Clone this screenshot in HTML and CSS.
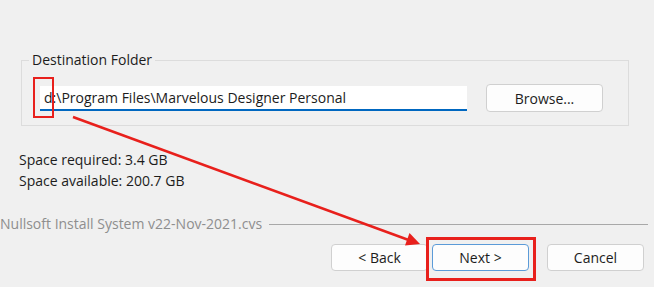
FILE: index.html
```html
<!DOCTYPE html>
<html lang="en">
<head>
    <meta charset="UTF-8">
    <title>Installer - Choose Install Location</title>
    <link rel="stylesheet" href="styles.css">
</head>
<body>
    <div id="page">
        <div class="group">
            <span class="group-title">Destination Folder</span>
            <div class="group-row">
                <div class="path-input">d:\Program Files\Marvelous Designer Personal</div>
                <button class="btn btn-browse">Browse...</button>
            </div>
        </div>

        <div class="space-info">
            <div>Space required: 3.4 GB</div>
            <div>Space available: 200.7 GB</div>
        </div>

        <div class="branding">
            <span class="branding-text">Nullsoft Install System v22-Nov-2021.cvs</span>
            <span class="branding-line"></span>
        </div>

        <div class="buttons">
            <button class="btn">&lt; Back</button>
            <button class="btn btn-default">Next &gt;</button>
            <button class="btn btn-cancel">Cancel</button>
        </div>

        <!-- annotation overlay -->
        <div class="mark mark-drive"></div>
        <div class="mark mark-next"></div>
        <svg class="arrow" width="654" height="287" viewBox="0 0 654 287">
            <line x1="73" y1="117" x2="410" y2="240.5" stroke="#e8201c" stroke-width="2.5"/>
            <polygon points="420,244 405,245.5 409.5,233" fill="#e8201c"/>
        </svg>
    </div>
</body>
</html>
```

FILE: styles.css
```css
body {
    margin: 0;
    padding: 0;
    background-color: #f0f0f0;
    font-family: "Open Sans", "Noto Sans", sans-serif;
    font-size: 14px;
    color: #1c1c1c;
}

#page {
    position: relative;
    width: 654px;
    height: 287px;
    overflow: hidden;
}

.group {
    margin: 60px 25px 0 21px;
    height: 64px;
    border: 1px solid #dcdcdc;
}

.group-title {
    display: inline-block;
    margin: -10px 0 0 7px;
    padding: 0 3px;
    background-color: #f0f0f0;
    line-height: 18px;
    vertical-align: top;
}

.group-row {
    display: flex;
    align-items: center;
    padding-left: 18px;
    margin-top: 4px;
}

.path-input {
    width: 423px;
    height: 23px;
    padding-left: 4px;
    background-color: #fff;
    border-bottom: 2px solid #0067c0;
    line-height: 24px;
    white-space: nowrap;
}

.btn {
    height: 27px;
    width: 97px;
    padding: 0;
    font-family: inherit;
    font-size: 14px;
    color: #1c1c1c;
    background-color: #fdfdfd;
    border: 1px solid #d0d0d0;
    border-radius: 4px;
}

.btn-browse {
    width: 117px;
    height: 28px;
    margin-left: 19px;
}

.btn-default {
    border-color: #5b9bd8;
    margin-left: 4px;
}

.btn-cancel {
    margin-left: 18px;
}

.space-info {
    margin: 23px 0 0 19px;
    line-height: 21px;
}

.branding {
    display: flex;
    align-items: center;
    margin-top: 23px;
    color: #8e8e8e;
}

.branding-text {
    white-space: nowrap;
}

.branding-line {
    flex: 1;
    margin: 2px 6px 0 7px;
    border-top: 1px solid #a8a8a8;
}

.buttons {
    display: flex;
    justify-content: flex-end;
    margin: 11px 10px 0 0;
}

.mark {
    position: absolute;
    border: 2px solid #e8201c;
}

.mark-drive {
    left: 33px;
    top: 77px;
    width: 17px;
    height: 37px;
}

.mark-next {
    left: 426px;
    top: 237px;
    width: 104px;
    height: 38px;
    border-width: 3px;
}

.arrow {
    position: absolute;
    left: 0;
    top: 0;
}
```
